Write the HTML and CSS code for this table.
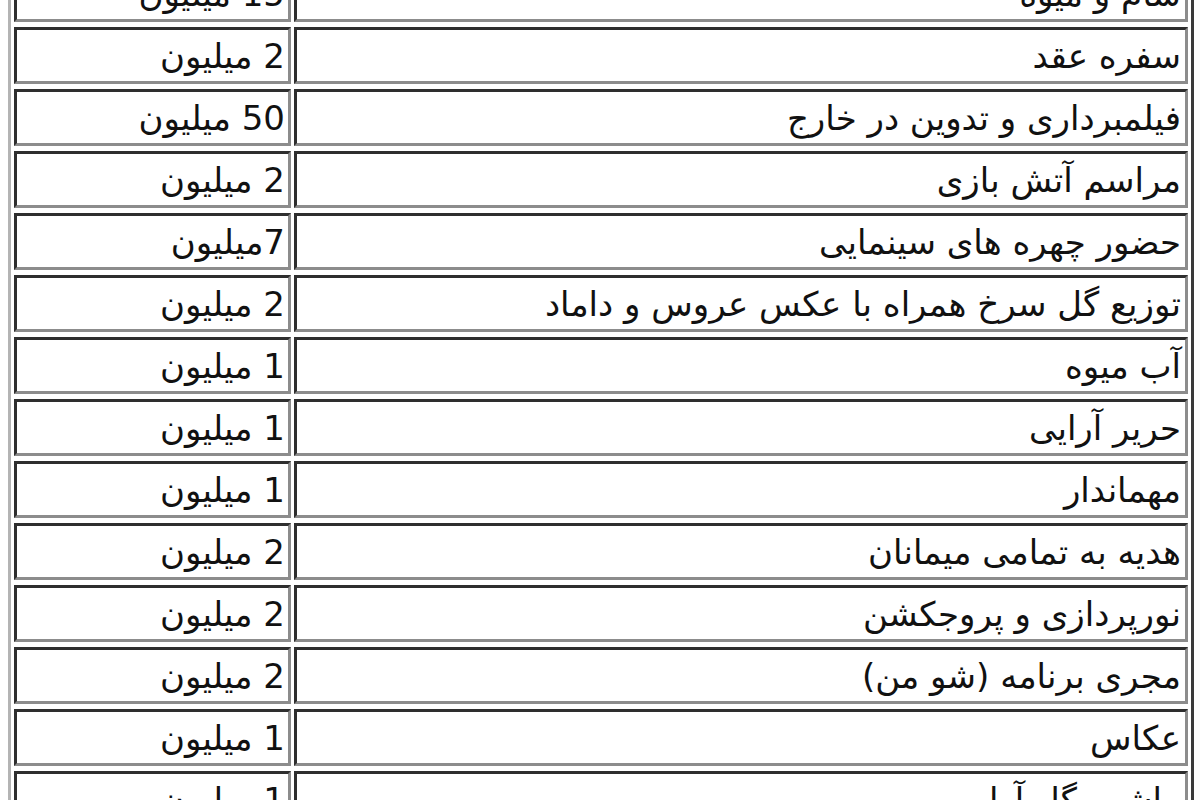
FILE: index.html
```html
<!DOCTYPE html>
<html lang="fa" dir="rtl">
<head>
<meta charset="utf-8">
<title>هزینه ها</title>
<link rel="stylesheet" href="styles.css">
</head>
<body>
<table class="costs">
  <tbody>
    <tr><td class="item">شام و میوه</td><td class="price">15 میلیون</td></tr>
    <tr><td class="item">سفره عقد</td><td class="price">2 میلیون</td></tr>
    <tr><td class="item">فیلمبرداری و تدوین در خارج</td><td class="price">50 میلیون</td></tr>
    <tr><td class="item">مراسم آتش بازی</td><td class="price">2 میلیون</td></tr>
    <tr><td class="item">حضور چهره های سینمایی</td><td class="price">7میلیون</td></tr>
    <tr><td class="item">توزیع گل سرخ همراه با عکس عروس و داماد</td><td class="price">2 میلیون</td></tr>
    <tr><td class="item">آب میوه</td><td class="price">1 میلیون</td></tr>
    <tr><td class="item">حریر آرایی</td><td class="price">1 میلیون</td></tr>
    <tr><td class="item">مهماندار</td><td class="price">1 میلیون</td></tr>
    <tr><td class="item">هدیه به تمامی میمانان</td><td class="price">2 میلیون</td></tr>
    <tr><td class="item">نورپردازی و پروجکشن</td><td class="price">2 میلیون</td></tr>
    <tr><td class="item">مجری برنامه (شو من)</td><td class="price">2 میلیون</td></tr>
    <tr><td class="item">عکاس</td><td class="price">1 میلیون</td></tr>
    <tr><td class="item">ماشین گل آرایی</td><td class="price">1 میلیون</td></tr>
  </tbody>
</table>
</body>
</html>
```
FILE: styles.css
```css
html, body {
  background: #ffffff;
}
body {
  margin: 0 6px 0 8px;
  font-family: "DejaVu Sans", Tahoma, sans-serif;
  color: #111111;
  overflow: hidden;
}
.costs {
  width: 1186px;
  margin-top: -43px;
  border-collapse: separate;
  border-spacing: 3px 5px;
  border-style: solid;
  border-width: 3px;
  border-color: #b4b4b4 #3a3a3a #3a3a3a #b4b4b4;
}
.costs td {
  font-size: 34px;
  line-height: 49px;
  padding: 2px 4px 0 4px;
  text-align: right;
  vertical-align: middle;
  white-space: nowrap;
  border-style: solid;
  border-width: 3px;
  border-color: #2e2e2e #8c8c8c #8c8c8c #2e2e2e;
}
.costs .price {
  width: 277px;
  box-sizing: border-box;
  padding-right: 3px;
}
```
